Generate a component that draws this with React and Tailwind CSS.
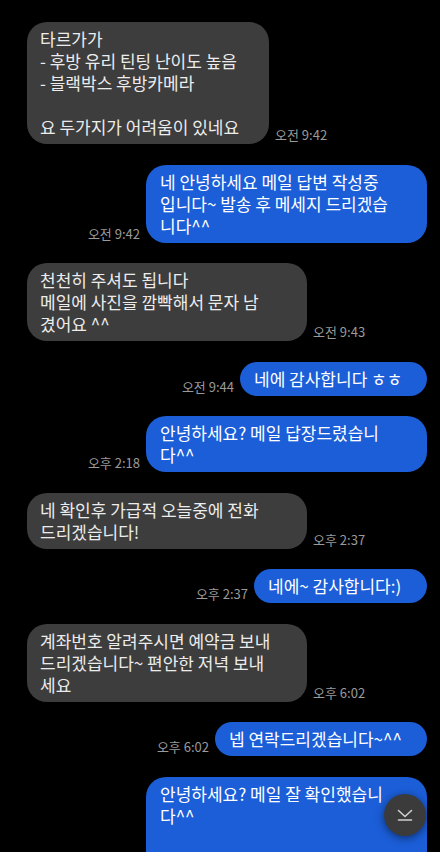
import React from "react";

const MESSAGES = [
  {
    me: false,
    time: "오전 9:42",
    w: "w-[242px]",
    lines: ["타르가가", "- 후방 유리 틴팅 난이도 높음", "- 블랙박스 후방카메라", "", "요 두가지가 어려움이 있네요"],
  },
  {
    me: true,
    time: "오전 9:42",
    w: "w-[281px]",
    lines: ["네 안녕하세요 메일 답변 작성중", "입니다~ 발송 후 메세지 드리겠습", "니다^^"],
  },
  {
    me: false,
    time: "오전 9:43",
    w: "w-[280px]",
    lines: ["천천히 주셔도 됩니다", "메일에 사진을 깜빡해서 문자 남", "겼어요 ^^"],
  },
  { me: true, time: "오전 9:44", w: "w-[187px]", lines: ["네에 감사합니다 ㅎㅎ"] },
  {
    me: true,
    time: "오후 2:18",
    w: "w-[281px]",
    lines: ["안녕하세요? 메일 답장드렸습니", "다^^"],
  },
  {
    me: false,
    time: "오후 2:37",
    w: "w-[280px]",
    lines: ["네 확인후 가급적 오늘중에 전화", "드리겠습니다!"],
  },
  { me: true, time: "오후 2:37", w: "w-[173px]", lines: ["네에~ 감사합니다:)"] },
  {
    me: false,
    time: "오후 6:02",
    w: "w-[280px]",
    lines: ["계좌번호 알려주시면 예약금 보내", "드리겠습니다~ 편안한 저녁 보내", "세요"],
  },
  { me: true, time: "오후 6:02", w: "w-[212px]", lines: ["넵 연락드리겠습니다~^^"] },
];

// keep the phone's own line breaks instead of letting the browser wrap
const Lines = ({ lines }) =>
  lines.map((l, i) => (
    <React.Fragment key={i}>
      {i > 0 && <br />}
      {l}
    </React.Fragment>
  ));

const Bubble = ({ me, time, w, lines }) => (
  <div className={`flex items-end gap-[6px] ${me ? "justify-end" : "justify-start"}`}>
    {me && <span className="text-[13px] leading-[18px] text-[#9a9a9a] whitespace-nowrap">{time}</span>}
    <p
      className={`${w} shrink-0 rounded-[20px] py-[6px] text-[17px] leading-[22px] whitespace-nowrap ${
        me ? "bg-[#1b5ed8] text-white pl-[14px] pr-[13px]" : "bg-[#3d3d3d] text-[#ececec] px-[13px]"
      }`}
    >
      <Lines lines={lines} />
    </p>
    {!me && <span className="text-[13px] leading-[18px] text-[#9a9a9a] whitespace-nowrap">{time}</span>}
  </div>
);

export default function App() {
  return (
    <div
      className="relative h-[852px] w-[440px] overflow-hidden bg-black"
      style={{ fontFamily: '"Noto Sans CJK KR", "Noto Sans", sans-serif' }}
    >
      <div className="flex flex-col gap-[20.5px] pt-[22px] pl-[27px] pr-[13px]">
        {MESSAGES.map((m, i) => (
          <Bubble key={i} {...m} />
        ))}

        {/* last message, cut off by the screen edge */}
        <div className="flex justify-end">
          <p className="w-[281px] h-[110px] shrink-0 rounded-t-[20px] bg-[#1b5ed8] pl-[14px] pr-[13px] py-[6px] text-[17px] leading-[22px] text-white whitespace-nowrap">
            안녕하세요? 메일 잘 확인했습니
            <br />
            다^^
          </p>
        </div>
      </div>

      {/* scroll to bottom */}
      <button className="absolute left-[384px] top-[794px] flex h-[42px] w-[42px] items-center justify-center rounded-full bg-[#3b3b3b] shadow-[0_2px_8px_rgba(0,0,0,0.5)]">
        <svg width="16" height="14" viewBox="0 0 16 14" fill="none" stroke="#d0d0d0" strokeWidth="1.6" strokeLinecap="round" strokeLinejoin="round">
          <path d="M1.5 2.5l6.5 6 6.5-6" />
          <path d="M1.5 12h13" />
        </svg>
      </button>
    </div>
  );
}
